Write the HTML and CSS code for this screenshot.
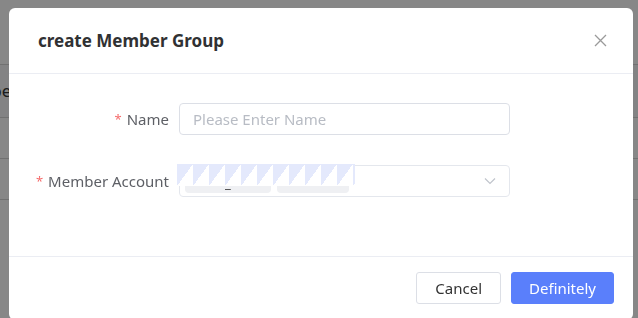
FILE: index.html
```html
<!DOCTYPE html>
<html lang="en">
<head>
    <meta charset="UTF-8">
    <meta name="viewport" content="width=device-width, initial-scale=1.0">
    <title>create Member Group</title>
    <link rel="stylesheet" href="styles.css">
</head>
<body>
    <!-- Page behind the dialog -->
    <div class="page">
        <div class="page-top"></div>
        <div class="page-row page-row-head"><span class="page-cell">Open</span></div>
        <div class="page-row"></div>
        <div class="page-row"></div>
        <div class="page-row"></div>
    </div>

    <!-- Dialog -->
    <div class="mask">
        <div class="dialog">
            <div class="dialog-header">
                <h2 class="dialog-title">create Member Group</h2>
                <button class="dialog-close" aria-label="Close">
                    <svg width="13" height="13" viewBox="0 0 13 13">
                        <path d="M1 1 L12 12 M12 1 L1 12" stroke="#9a9a9a" stroke-width="1.3" fill="none"/>
                    </svg>
                </button>
            </div>
            <div class="dialog-body">
                <div class="form-item">
                    <label class="form-label"><span class="required">*</span>Name</label>
                    <input class="form-input" type="text" placeholder="Please Enter Name">
                </div>
                <div class="form-item">
                    <label class="form-label"><span class="required">*</span>Member Account</label>
                    <div class="form-select">
                        <div class="tags">
                            <span class="tag"><span class="tag-text">_</span></span>
                            <span class="tag tag-short"></span>
                        </div>
                        <svg class="select-arrow" width="12" height="8" viewBox="0 0 12 8">
                            <path d="M1 1.5 L6 6.5 L11 1.5" stroke="#c0c4cc" stroke-width="1.2" fill="none"/>
                        </svg>
                        <div class="mosaic"></div>
                    </div>
                </div>
            </div>
            <div class="dialog-footer">
                <button class="btn">Cancel</button>
                <button class="btn btn-primary">Definitely</button>
            </div>
        </div>
    </div>
</body>
</html>
```

FILE: styles.css
```css
body {
    margin: 0;
    padding: 0;
    font-family: "Noto Sans", "Liberation Sans", sans-serif;
    background-color: #fff;
    overflow: hidden;
}

/* background page */
.page {
    height: 318px;
}
.page-top {
    height: 64px;
}
.page-row {
    height: 40px;
    border-top: 1px solid #d6d6d6;
}
.page-row-head {
    background-color: #f7f8fa;
    height: 52px;
}
.page-cell {
    display: block;
    padding: 14px 0 0 0;
    margin-left: -22px;
    font-size: 17px;
    color: #333;
}

/* overlay + dialog */
.mask {
    position: fixed;
    top: 0;
    left: 0;
    right: 0;
    bottom: 0;
    background-color: rgba(0, 0, 0, 0.47);
    padding: 8px 0 0 9px;
}
.dialog {
    width: 624px;
    background-color: #fff;
    border-radius: 6px;
}
.dialog-header {
    height: 65px;
    display: flex;
    align-items: center;
    justify-content: space-between;
    padding: 0 26px 0 29px;
    border-bottom: 1px solid #ebedf3;
}
.dialog-title {
    margin: 0;
    font-size: 17px;
    font-weight: bold;
    color: #303133;
}
.dialog-close {
    border: none;
    background: none;
    padding: 0;
    width: 13px;
    height: 13px;
    display: flex;
}

.dialog-body {
    padding: 29px 0 59px 0;
    display: flex;
    flex-direction: column;
    gap: 30px;
}
.form-item {
    display: flex;
    align-items: center;
    height: 32px;
}
.form-label {
    width: 160px;
    padding-right: 10px;
    text-align: right;
    font-size: 15px;
    color: #5e6066;
}
.required {
    color: #f56c6c;
    font-size: 13px;
    margin-right: 5px;
    position: relative;
    top: -1px;
}
.form-input {
    width: 331px;
    height: 32px;
    box-sizing: border-box;
    border: 1px solid #dcdfe6;
    border-radius: 4px;
    padding: 0 13px;
    font-family: inherit;
    font-size: 15px;
    color: #606266;
    outline: none;
}
.form-input::placeholder {
    color: #b8bcc4;
}
.form-select {
    position: relative;
    width: 331px;
    height: 32px;
    box-sizing: border-box;
    border: 1px solid #e4e7ed;
    border-radius: 4px;
    display: flex;
    align-items: center;
    justify-content: space-between;
    padding: 0 13px 0 5px;
}
.tags {
    display: flex;
    gap: 6px;
}
.tag {
    width: 86px;
    height: 24px;
    border-radius: 4px;
    background-color: #eff0f3;
    display: flex;
    justify-content: center;
    align-items: flex-end;
}
.tag-short {
    width: 72px;
}
.tag-text {
    font-size: 13px;
    line-height: 13px;
    color: #333;
    padding-bottom: 3px;
}
.select-arrow {
    display: block;
}
.mosaic {
    position: absolute;
    top: -2px;
    left: -3px;
    width: 178px;
    height: 22px;
    background-color: #fff;
    background-image: linear-gradient(to bottom right, #e4e9fc 50%, transparent 50%);
    background-size: 16px 22px;
}

.dialog-footer {
    padding: 15px 19px 16px 0;
    display: flex;
    justify-content: flex-end;
    gap: 10px;
    border-top: 1px solid #ebedf3;
}
.btn {
    height: 32px;
    padding: 0 18px;
    border: 1px solid #dcdfe6;
    border-radius: 3px;
    background-color: #fff;
    font-family: inherit;
    font-size: 15px;
    color: #333;
}
.btn-primary {
    padding: 0 17px;
    border-color: #5a7ffb;
    background-color: #5a7ffb;
    color: #fff;
}
```
